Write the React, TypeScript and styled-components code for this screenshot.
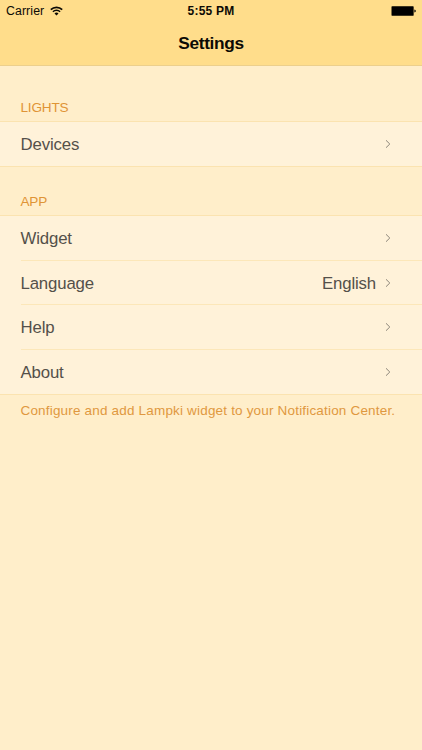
import React from 'react';
import styled, { createGlobalStyle } from 'styled-components';

const GlobalStyle = createGlobalStyle`
  * {
    box-sizing: border-box;
  }

  body {
    margin: 0;
    background: #ffeeca;
    font-family: 'Liberation Sans', Arial, sans-serif;
  }
`;

const Screen = styled.div`
  min-height: 750px;
  background: #ffeeca;
`;

const Header = styled.header`
  height: 66px;
  background: #ffdd8b;
  border-bottom: 1px solid #eccf8c;
  color: #0c0a05;
`;

const StatusBar = styled.div`
  display: grid;
  grid-template-columns: 1fr auto 1fr;
  align-items: center;
  height: 22px;
  padding: 0 6px;
`;

const Carrier = styled.div`
  display: flex;
  align-items: center;
  gap: 6px;
  font-size: 12.3px;
  letter-spacing: 0.1px;

  svg {
    margin-top: -1px;
  }
`;

const Clock = styled.div`
  font-size: 12px;
  font-weight: bold;
  letter-spacing: 0.2px;
`;

const Battery = styled.div`
  display: flex;
  justify-content: flex-end;
`;

const Title = styled.h1`
  margin: 0;
  font-size: 17.3px;
  line-height: 43px;
  font-weight: bold;
  letter-spacing: -0.35px;
  text-align: center;
`;

const SectionTitle = styled.h2<{ $height: number }>`
  display: flex;
  align-items: flex-end;
  height: ${(props) => props.$height}px;
  margin: 0;
  padding: 0 20.5px 5px;
  color: #df9436;
  font-size: 13.6px;
  line-height: 16px;
  font-weight: normal;
  letter-spacing: -0.2px;
`;

const List = styled.div`
  border-top: 1px solid #fbe3b0;
  border-bottom: 1px solid #fbe3b0;
  background: #fff2d9;
`;

const Row = styled.div<{ $height: number; $divider?: boolean }>`
  display: flex;
  align-items: center;
  height: ${(props) => props.$height}px;
  margin-left: 21px;
  padding-right: 31px;
  border-bottom: ${(props) => (props.$divider ? '1px solid #fce7b9' : 'none')};
  color: #54504a;
  font-size: 16.8px;
  line-height: 20px;
  letter-spacing: -0.15px;
`;

const RowLabel = styled.span`
  flex: 1;
  margin-left: -0.5px;
  padding-top: 2px;
`;

const RowValue = styled.span`
  margin-right: 9px;
  padding-top: 2px;
`;

const Footnote = styled.p`
  margin: 0;
  padding: 8px 20.5px 0;
  color: #df9840;
  font-size: 13.5px;
  line-height: 16px;
  letter-spacing: 0.18px;
  white-space: nowrap;
`;

const WifiIcon = () => (
  <svg width="13" height="10" viewBox="0 0 13 10" fill="none" stroke="#0c0a05">
    <path d="M0.8 3.7A8.1 8.1 0 0 1 12.2 3.7" strokeWidth="1.7" />
    <path d="M2.9 5.8A5.1 5.1 0 0 1 10.1 5.8" strokeWidth="1.5" />
    <path d="M4.5 7.4A2.85 2.85 0 0 1 8.5 7.4L6.5 9.4Z" fill="#0c0a05" stroke="none" />
  </svg>
);

const BatteryIcon = () => (
  <svg width="25" height="11" viewBox="0 0 25 11">
    <rect x="0.3" y="0" width="22.5" height="10" rx="1" fill="#7b6a3f" />
    <rect x="0.8" y="0.5" width="21.6" height="9" rx="0.6" fill="#000" />
    <path d="M23.4 3.5V6.5Q24.8 6.2 24.8 5T23.4 3.5Z" fill="#000" />
  </svg>
);

const Chevron = () => (
  <svg width="6" height="10" viewBox="0 0 6 10" fill="none" stroke="#8d867a">
    <path d="M1 1.3L4.8 5L1 8.7" />
  </svg>
);

const appRows = [
  { label: 'Widget', height: 45 },
  { label: 'Language', value: 'English', height: 44 },
  { label: 'Help', height: 45 },
  { label: 'About', height: 44 },
];

const App: React.FC = () => (
  <>
    <GlobalStyle />
    <Screen>
      <Header>
        <StatusBar>
          <Carrier>
            Carrier
            <WifiIcon />
          </Carrier>
          <Clock>5:55 PM</Clock>
          <Battery>
            <BatteryIcon />
          </Battery>
        </StatusBar>
        <Title>Settings</Title>
      </Header>

      <SectionTitle $height={55}>LIGHTS</SectionTitle>
      <List>
        <Row $height={44}>
          <RowLabel>Devices</RowLabel>
          <Chevron />
        </Row>
      </List>

      <SectionTitle $height={48}>APP</SectionTitle>
      <List>
        {appRows.map((row, index) => (
          <Row key={row.label} $height={row.height} $divider={index < appRows.length - 1}>
            <RowLabel>{row.label}</RowLabel>
            {row.value && <RowValue>{row.value}</RowValue>}
            <Chevron />
          </Row>
        ))}
      </List>
      <Footnote>Configure and add Lampki widget to your Notification Center.</Footnote>
    </Screen>
  </>
);

export default App;
